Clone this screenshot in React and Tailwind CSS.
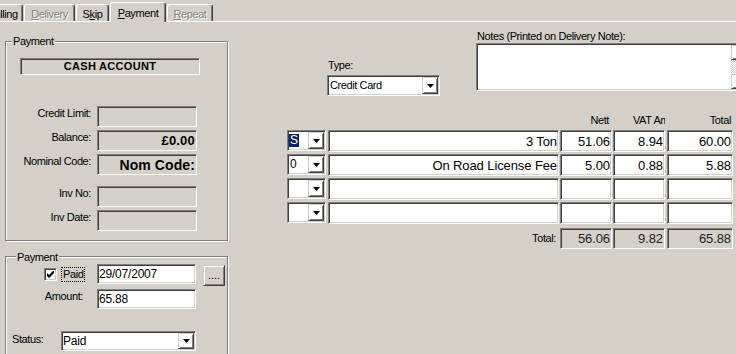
import React from 'react'

const sunken = 'border border-t-[#808080] border-l-[#808080] border-r-white border-b-white shadow-[inset_1px_1px_0_#404040,inset_-1px_-1px_0_#d4d0c8]'
const raised = 'border border-t-[#d4d0c8] border-l-[#d4d0c8] border-r-[#404040] border-b-[#404040] shadow-[inset_1px_1px_0_#fff,inset_-1px_-1px_0_#808080]'
const etched = 'border border-[#808080] shadow-[1px_1px_0_#fff,inset_1px_1px_0_#fff]'
const tabBase = 'flex items-center justify-center pt-[2px] whitespace-nowrap border-t border-l border-r border-t-white border-l-white border-r-[#404040] rounded-t-[3px] shadow-[inset_-1px_0_0_#808080]'
const disabledText = 'text-[#808080] [text-shadow:1px_1px_0_#fff]'

function DropBtn() {
  return (
    <div className={`${raised} w-[16px] shrink-0 flex items-center justify-center`}>
      <svg width="7" height="4" viewBox="0 0 7 4">
        <path d="M0 0h7L3.5 4z" fill="#000" />
      </svg>
    </div>
  )
}

function Combo({ className, children }) {
  return (
    <div className={`${sunken} bg-white flex p-[1px] ${className}`}>
      <div className="flex-1 flex items-center min-w-0 overflow-hidden whitespace-nowrap">{children}</div>
      <DropBtn />
    </div>
  )
}

function InfoRow({ label, mt, children }) {
  return (
    <div className={`flex ${mt}`}>
      <div className="w-[85px] text-right pt-[1px] whitespace-nowrap">{label}</div>
      <div className={`ml-[6px] w-[100px] h-[21px] ${sunken} flex items-center justify-end pr-[1px] font-bold tracking-[0.2px]`}>
        {children}
      </div>
    </div>
  )
}

const rows = [
  { code: 'S', sel: true, desc: '3 Ton', nett: '51.06', vat: '8.94', total: '60.00' },
  { code: '0', desc: 'On Road License Fee', nett: '5.00', vat: '0.88', total: '5.88' },
  { code: '' },
  { code: '' },
]

const cell = `${sunken} h-[22px] flex items-center justify-end pr-[1px] text-[13px] leading-[15px] tracking-[-0.1px] whitespace-nowrap`
const totalCell = `${sunken} h-[21px] flex items-center justify-end pr-[1px] text-[13px] tracking-[-0.1px] text-[#222]`

export default function App() {
  return (
    <div className="w-[736px] h-[354px] overflow-hidden bg-[#d4d0c8] text-black font-['Liberation_Sans',Arial,sans-serif] text-[11px] leading-[13px] tracking-[-0.4px]">
      {/* tab strip */}
      <div className="flex items-end gap-[1px] h-[22px] border-b border-white">
        <div className={`${tabBase} -ml-[14px] w-[37px] h-[17px]`}>Billing</div>
        <div className={`${tabBase} w-[51px] h-[17px] ${disabledText}`}>
          <span><u>D</u>elivery</span>
        </div>
        <div className={`${tabBase} w-[33px] h-[17px]`}>
          <span>S<u>k</u>ip</span>
        </div>
        <div className={`${tabBase} relative -mb-px w-[56px] h-[20px] bg-[#d4d0c8]`}>
          <span><u>P</u>ayment</span>
        </div>
        <div className={`${tabBase} w-[46px] h-[17px] ${disabledText}`}>
          <span><u>R</u>epeat</span>
        </div>
      </div>

      <div className="flex">
        {/* left column */}
        <div className="w-[229px] shrink-0 pl-[5px]">
          <div className={`relative mt-[19px] w-[223px] h-[200px] ${etched} pt-[16px]`}>
            <span className="absolute left-[6px] top-[-7px] bg-[#d4d0c8] px-[1px]">Payment</span>
            <div className={`ml-[14px] w-[180px] h-[17px] ${sunken} flex items-center justify-center font-bold tracking-[0.3px]`}>
              CASH ACCOUNT
            </div>
            <InfoRow label="Credit Limit:" mt="mt-[31px]" />
            <InfoRow label="Balance:" mt="mt-[3px]">
              <span className="text-[13px] leading-[15px]">£0.00</span>
            </InfoRow>
            <InfoRow label="Nominal Code:" mt="mt-[3px]">
              <span className="text-[14px] leading-[16px] tracking-[0.1px]">Nom Code:</span>
            </InfoRow>
            <InfoRow label="Inv No:" mt="mt-[11px]" />
            <InfoRow label="Inv Date:" mt="mt-[3px]" />
          </div>

          <div className={`relative mt-[15px] w-[223px] h-[110px] ${etched} pt-[7px]`}>
            <span className="absolute left-[10px] top-[-6px] bg-[#d4d0c8] px-[1px]">Payment</span>
            <div className="flex items-start h-[22px]">
              <div className="w-[91px] h-[20px] flex items-center">
                <div className={`ml-[38px] w-[13px] h-[13px] ${sunken} bg-white flex items-center justify-center`}>
                  <svg width="7" height="7" viewBox="0 0 7 7">
                    <path d="M0 2L2 4L7 -1V2L2 7L0 5Z" fill="#000" />
                  </svg>
                </div>
                <span className="ml-[4px] border border-dotted border-black px-[1px]">Paid</span>
              </div>
              <div className={`w-[99px] h-[20px] ${sunken} bg-white flex items-center pl-[1px] text-[12px] tracking-[-0.2px]`}>
                29/07/2007
              </div>
              <div className={`ml-[7px] mt-[1px] w-[22px] h-[21px] ${raised} flex items-center justify-center tracking-[0px]`}>
                ....
              </div>
            </div>
            <div className="flex mt-[3px]">
              <div className="w-[91px] text-right pr-[14px] pt-[1px]">Amount:</div>
              <div className={`w-[99px] h-[20px] ${sunken} bg-white flex items-center pl-[1px] text-[12px] tracking-[-0.2px]`}>
                65.88
              </div>
            </div>
            <div className="flex mt-[22px]">
              <div className="w-[55px] pl-[6px] pt-[2px]">Status:</div>
              <Combo className="w-[135px] h-[20px]">
                <span className="text-[12px] tracking-[-0.2px]">Paid</span>
              </Combo>
            </div>
          </div>
        </div>

        {/* right column */}
        <div className="flex-1 min-w-0">
          <div className="flex items-start">
            <div className="ml-[98px] mt-[37px] w-[113px] shrink-0">
              <div className="pl-[1px]">Type:</div>
              <Combo className="mt-[3px] w-[113px] h-[21px]">
                <span className="pl-[1px]">Credit Card</span>
              </Combo>
            </div>
            <div className="ml-[36px] mt-[8px] shrink-0">
              <div className="pl-[1px] whitespace-nowrap">Notes (Printed on Delivery Note):</div>
              <div className={`${sunken} bg-white h-[48px] w-[273px] p-[1px] flex`}>
                <div className="flex-1" />
                <div className="w-[16px] flex flex-col">
                  <div className={`${raised} h-[15px]`} />
                  <div className="flex-1 bg-[repeating-conic-gradient(#fff_0%_25%,#d4d0c8_0%_50%)] bg-[length:2px_2px]" />
                  <div className={`${raised} h-[15px]`} />
                </div>
              </div>
            </div>
          </div>

          {/* grid header */}
          <div className="flex mt-[18px] pl-[58px] h-[13px]">
            <div className="w-[39px]" />
            <div className="ml-[2px] w-[231px]" />
            <div className="ml-[1px] w-[52px] text-right pr-[3px]">Nett</div>
            <div className="ml-[1px] w-[52px] pl-[20px] overflow-hidden whitespace-nowrap">VAT Amount</div>
            <div className="ml-[2px] w-[66px] text-right pr-[2px]">Total</div>
          </div>

          {/* grid rows */}
          <div className="mt-[3px] pl-[58px] flex flex-col gap-[2px]">
            {rows.map((r, i) => (
              <div key={i} className="flex items-start">
                <Combo className="w-[39px] h-[21px]">
                  {r.sel ? (
                    <span className="text-[12px] leading-[13px] bg-[#0a246a] text-white px-[1px]">{r.code}</span>
                  ) : (
                    <span className="text-[12px] px-[1px]">{r.code}</span>
                  )}
                </Combo>
                <div className={`ml-[2px] w-[231px] bg-white ${cell}`}>{r.desc}</div>
                <div className={`ml-[1px] w-[52px] bg-white ${cell}`}>{r.nett}</div>
                <div className={`ml-[1px] w-[52px] bg-white ${cell}`}>{r.vat}</div>
                <div className={`ml-[2px] w-[66px] bg-white ${cell}`}>{r.total}</div>
              </div>
            ))}
          </div>

          {/* totals */}
          <div className="flex mt-[4px] pl-[58px]">
            <div className="w-[39px]" />
            <div className="ml-[2px] w-[231px] h-[21px] flex items-center justify-end pr-[3px]">Total:</div>
            <div className={`ml-[1px] w-[52px] ${totalCell}`}>56.06</div>
            <div className={`ml-[1px] w-[52px] ${totalCell}`}>9.82</div>
            <div className={`ml-[2px] w-[66px] ${totalCell}`}>65.88</div>
          </div>
        </div>
      </div>
    </div>
  )
}
